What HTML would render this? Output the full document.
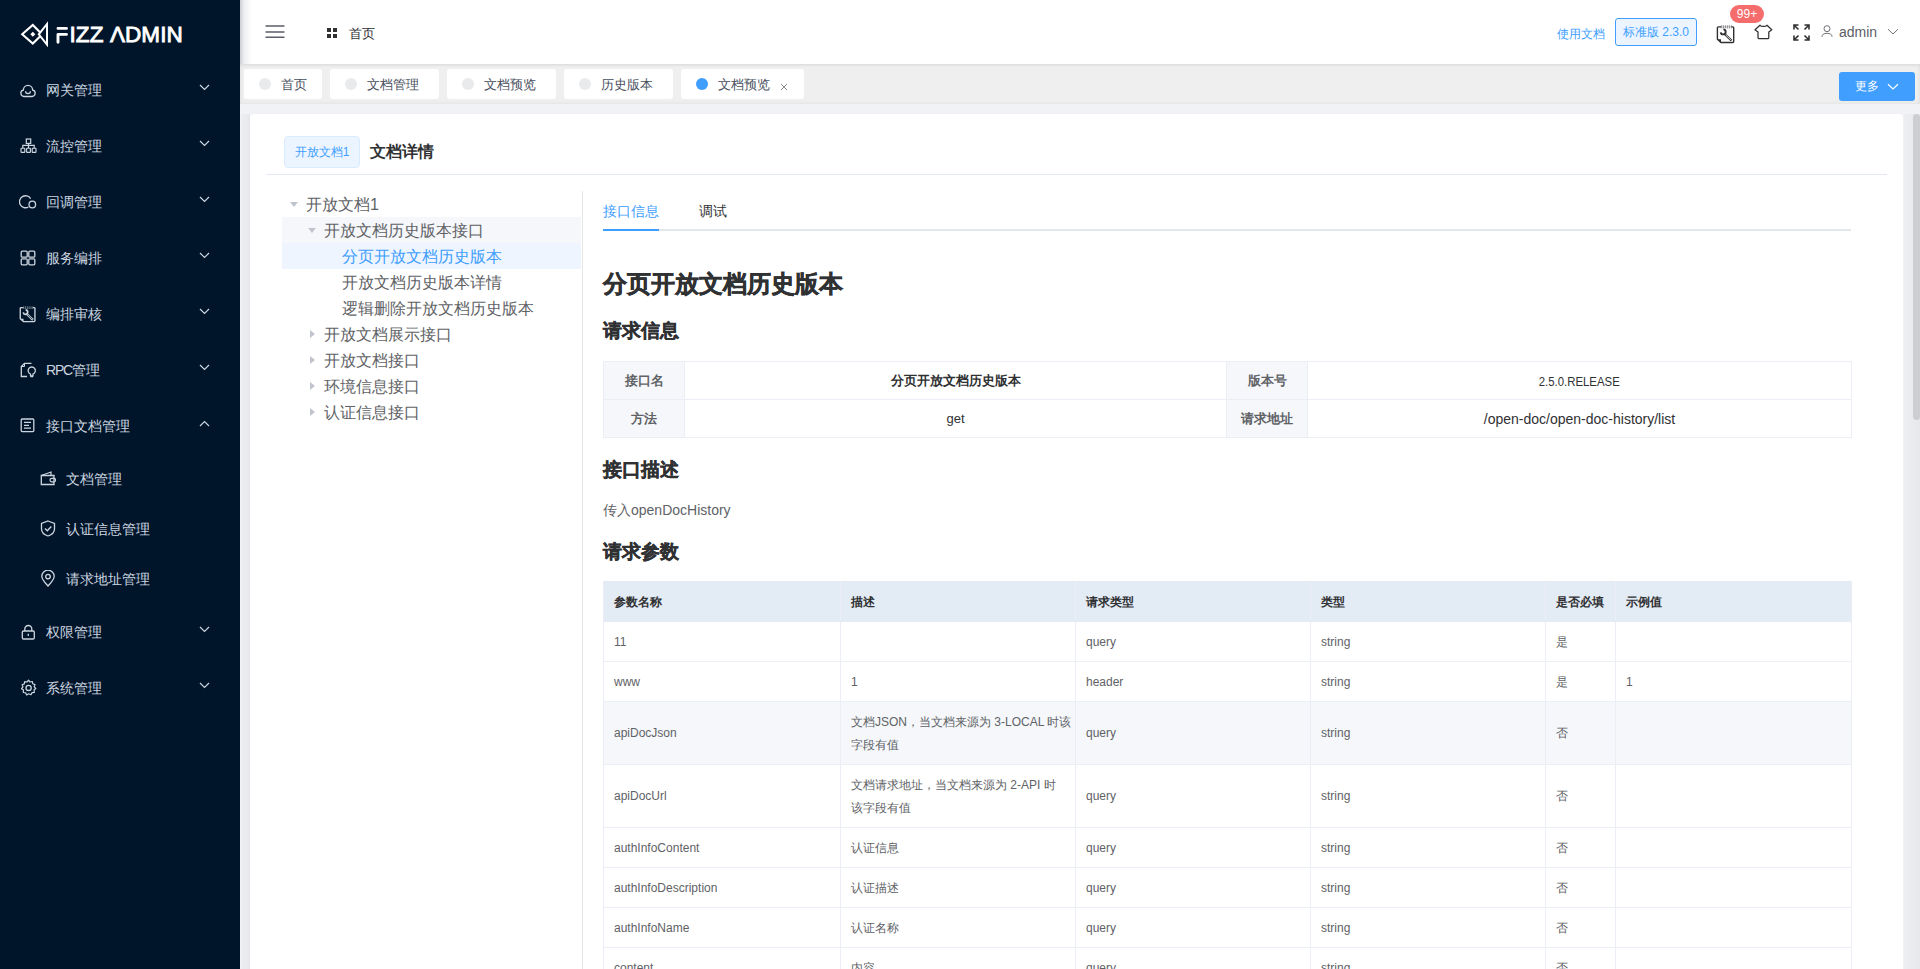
<!DOCTYPE html>
<html><head><meta charset="utf-8">
<style>
*{box-sizing:border-box;margin:0;padding:0}
html,body{width:1920px;height:969px;overflow:hidden;background:#f0f2f5;font-family:"Liberation Sans",sans-serif;color:#606266}
.abs{position:absolute}
#side{position:absolute;left:0;top:0;width:240px;height:969px;background:#001529;z-index:3}
.mi{position:absolute;left:0;width:240px;height:56px;color:#cdd5e0;font-size:14px}
.mi .t{position:absolute;left:46px;top:1px;line-height:56px;white-space:nowrap}
.mi svg.ic{position:absolute}
.mi svg.ch{position:absolute;left:199px;top:23px}
.si .t{left:66px;line-height:50px}
#hdr{position:absolute;left:240px;top:0;width:1680px;height:64px;background:#fff;z-index:2;box-shadow:0 1px 4px rgba(0,21,41,.08)}
#tabs{position:absolute;left:240px;top:64px;width:1680px;height:40px;background:#efefef;z-index:4;box-shadow:inset 0 0 4px rgba(0,0,0,.07), inset 0 2px 2px rgba(0,0,0,.035)}
.tab{position:absolute;top:5px;height:30px;background:#fff;border-radius:3px;font-size:13px;color:#495060}
.tab .dot{position:absolute;left:15px;top:9px;width:12px;height:12px;border-radius:50%;background:#e8eaec}
.tab .t{position:absolute;left:37px;top:1px;line-height:30px;white-space:nowrap}
#card{position:absolute;left:250px;top:114px;width:1653px;height:900px;background:#fff;border-radius:4px}
.sb{position:absolute;left:1913px;top:114px;width:7px;height:306px;background:#cdced2;border-radius:4px}
.tn{position:absolute;left:0;width:299px;height:26px}
.tn span{position:absolute;top:1px;line-height:26px;white-space:nowrap}
.car{position:absolute;width:0;height:0;border-style:solid}
.car.dn{top:11px;border-width:5px 4px 0 4px;border-color:#c0c4cc transparent transparent transparent}
.car.rt{top:9px;border-width:4px 0 4px 5px;border-color:transparent transparent transparent #c0c4cc}
table{border-collapse:collapse;table-layout:fixed}
.desc td{border:1px solid #ebeef5;height:38px;font-size:13px;text-align:center;color:#303133;padding:0 10px;white-space:nowrap}
.desc td.lb{background:#f5f7fa;color:#606266;font-weight:bold}
.ptab td{border:1px solid #ebeef5;height:40px;font-size:12px;color:#606266;padding:1px 10px 0;line-height:23px;white-space:nowrap;overflow:visible;vertical-align:middle}
.ptab tr.th td{background:#e3ebf4;color:#303133;font-weight:bold;border-color:#e3ebf4 #ebeef5}
.ptab tr.hv td{background:#f5f7fa}
.ptab tr.hv td,.ptab tr.two td{height:63px}
</style></head><body>

<div id="side">
  <!-- logo -->
  <svg class="abs" style="left:19px;top:21px" width="30" height="26" viewBox="0 0 30 26">
    <path d="M21 11.2 L13.8 4 L3.2 13.3 L13.8 22.6 L21 15.4" fill="none" stroke="#fff" stroke-width="2.1" stroke-linejoin="miter"/>
    <path d="M13.8 10.8 L16.3 13.3 L13.8 15.8 L11.3 13.3 Z" fill="#fff"/>
    <path d="M28 3 L28 23.6 L19.8 13.3 Z" fill="none" stroke="#fff" stroke-width="2" stroke-linejoin="miter"/>
  </svg>
  <svg class="abs" style="left:55px;top:25px" width="14" height="20" viewBox="0 0 14 20"><path d="M3 3.4 H11.5 M3 17.2 V9.4 H11.5" fill="none" stroke="#fff" stroke-width="2.9" stroke-linecap="round" stroke-linejoin="round"/></svg><div class="abs" style="left:69.5px;top:22px;font-size:22.5px;font-weight:normal;color:#fff;letter-spacing:0.1px;-webkit-text-stroke:0.85px #fff;line-height:26px;white-space:nowrap">IZZ ΛDMIN</div>

  <div class="mi" style="top:61px"><svg class="ic" style="left:20px;top:22px" width="16" height="15" viewBox="0 0 16 15"><path d="M4 13.5 H12 A3.3 3.3 0 0 0 12.6 7 A4.6 4.6 0 0 0 3.4 7 A3.3 3.3 0 0 0 4 13.5 Z" fill="none" stroke="#cdd5e0" stroke-width="1.3"/><path d="M5.6 8.3 A2.4 2.4 0 0 0 10.4 8.3" fill="none" stroke="#cdd5e0" stroke-width="1.3"/></svg><span class="t">网关管理</span><svg class="ch" width="11" height="7" viewBox="0 0 11 7"><path d="M1 1 L5.5 5.5 L10 1" fill="none" stroke="#cdd5e0" stroke-width="1.2"/></svg></div>

  <div class="mi" style="top:117px"><svg class="ic" style="left:20px;top:21px" width="17" height="16" viewBox="0 0 17 16"><rect x="6.3" y="1" width="4.4" height="4.4" fill="none" stroke="#cdd5e0" stroke-width="1.2"/><path d="M8.5 5.4 V7.4 M2.8 10 V7.4 H14.2 V10 M8.5 7.4 V10" fill="none" stroke="#cdd5e0" stroke-width="1.2"/><rect x="1" y="10.2" width="3.8" height="4.2" rx="0.6" fill="none" stroke="#cdd5e0" stroke-width="1.15"/><rect x="6.6" y="10.2" width="3.8" height="4.2" rx="0.6" fill="none" stroke="#cdd5e0" stroke-width="1.15"/><rect x="12.2" y="10.2" width="3.8" height="4.2" rx="0.6" fill="none" stroke="#cdd5e0" stroke-width="1.15"/></svg><span class="t">流控管理</span><svg class="ch" width="11" height="7" viewBox="0 0 11 7"><path d="M1 1 L5.5 5.5 L10 1" fill="none" stroke="#cdd5e0" stroke-width="1.2"/></svg></div>

  <div class="mi" style="top:173px"><svg class="ic" style="left:19px;top:21px" width="18" height="15" viewBox="0 0 18 15"><path d="M11.6 4.6 A6 6 0 1 0 9.4 13" fill="none" stroke="#cdd5e0" stroke-width="1.3"/><circle cx="13.3" cy="10.5" r="3.3" fill="none" stroke="#cdd5e0" stroke-width="1.3"/></svg><span class="t">回调管理</span><svg class="ch" width="11" height="7" viewBox="0 0 11 7"><path d="M1 1 L5.5 5.5 L10 1" fill="none" stroke="#cdd5e0" stroke-width="1.2"/></svg></div>

  <div class="mi" style="top:229px"><svg class="ic" style="left:20px;top:21px" width="16" height="16" viewBox="0 0 16 16"><rect x="1.2" y="1.2" width="6" height="6" rx="1" fill="none" stroke="#cdd5e0" stroke-width="1.3"/><rect x="8.8" y="1.2" width="6" height="6" rx="1" fill="none" stroke="#cdd5e0" stroke-width="1.3"/><rect x="1.2" y="8.8" width="6" height="6" rx="1" fill="none" stroke="#cdd5e0" stroke-width="1.3"/><rect x="8.8" y="8.8" width="6" height="6" rx="1" fill="none" stroke="#cdd5e0" stroke-width="1.3"/></svg><span class="t">服务编排</span><svg class="ch" width="11" height="7" viewBox="0 0 11 7"><path d="M1 1 L5.5 5.5 L10 1" fill="none" stroke="#cdd5e0" stroke-width="1.2"/></svg></div>

  <div class="mi" style="top:285px"><svg class="ic" style="left:19px;top:20px" width="18" height="18" viewBox="0 0 20 20"><path d="M4 2.9 H16.8 A0.9 0.9 0 0 1 17.7 3.8 V17.6 A0.9 0.9 0 0 1 16.8 18.5 H5 L1.4 15.2 V3.8 A0.9 0.9 0 0 1 2.3 2.9 Z" fill="none" stroke="#cdd5e0" stroke-width="1.5"/><path d="M1.6 15.3 H5 V18.4 Z" fill="#cdd5e0"/><path d="M5 3 H15.5" stroke="#001529" stroke-width="1.8"/><path d="M5.3 1.3 V4.4 M7.3 1.3 V4.4 M9.3 1.3 V4.4 M11.3 1.3 V4.4 M13.3 1.3 V4.4 M15.3 1.3 V4.4" stroke="#8a96a3" stroke-width="0.8"/><path d="M7.4 5.4 A2.5 2.5 0 1 1 4.7 8.3" fill="none" stroke="#cdd5e0" stroke-width="1.9"/><path d="M8.6 10 L15.5 16.5" stroke="#cdd5e0" stroke-width="2.4"/><path d="M9.6 10.9 L14.9 15.9" stroke="#001529" stroke-width="0.8"/></svg><span class="t">编排审核</span><svg class="ch" width="11" height="7" viewBox="0 0 11 7"><path d="M1 1 L5.5 5.5 L10 1" fill="none" stroke="#cdd5e0" stroke-width="1.2"/></svg></div>

  <div class="mi" style="top:341px"><svg class="ic" style="left:20px;top:21px" width="17" height="16" viewBox="0 0 17 16"><path d="M7 14.5 H1.3 V4.5 L4.5 1.3 H11.5" fill="none" stroke="#cdd5e0" stroke-width="1.3"/><path d="M1.3 4.5 H4.5 V1.3" fill="none" stroke="#cdd5e0" stroke-width="1"/><path d="M10.5 14.5 H13 M10.5 12 A3.6 3.6 0 1 1 13 12 V13.8 H10.5 Z" fill="none" stroke="#cdd5e0" stroke-width="1.3"/></svg><span class="t"><span style="letter-spacing:-1.2px">RPC</span>管理</span><svg class="ch" width="11" height="7" viewBox="0 0 11 7"><path d="M1 1 L5.5 5.5 L10 1" fill="none" stroke="#cdd5e0" stroke-width="1.2"/></svg></div>

  <div class="mi" style="top:397px"><svg class="ic" style="left:20px;top:21px" width="16" height="15" viewBox="0 0 16 15"><rect x="1.2" y="1" width="12.6" height="12.6" rx="1" fill="none" stroke="#cdd5e0" stroke-width="1.3"/><path d="M4 4.4 H11 M4 7.3 H9 M4 10.2 H11" stroke="#cdd5e0" stroke-width="1.2"/></svg><span class="t">接口文档管理</span><svg class="ch" width="11" height="7" viewBox="0 0 11 7"><path d="M1 6 L5.5 1.5 L10 6" fill="none" stroke="#cdd5e0" stroke-width="1.2"/></svg></div>

  <div class="mi si" style="top:453px;height:50px"><svg class="ic" style="left:40px;top:18px" width="17" height="15" viewBox="0 0 17 15"><path d="M14 6.5 V13.5 H1.3 V4.5 H14 V6.5" fill="none" stroke="#cdd5e0" stroke-width="1.3"/><path d="M1.3 4.5 L11 1 V4.5" fill="none" stroke="#cdd5e0" stroke-width="1.2"/><rect x="10" y="7.3" width="5.6" height="3.6" rx="1.8" fill="none" stroke="#cdd5e0" stroke-width="1.2"/></svg><span class="t">文档管理</span></div>
  <div class="mi si" style="top:503px;height:50px"><svg class="ic" style="left:40px;top:17px" width="16" height="17" viewBox="0 0 16 17"><path d="M8 1 L14.5 3.5 V9 C14.5 12.3 11.5 14.8 8 16 C4.5 14.8 1.5 12.3 1.5 9 V3.5 Z" fill="none" stroke="#cdd5e0" stroke-width="1.3"/><path d="M5 8.5 L7.3 10.8 L11.3 6.5" fill="none" stroke="#cdd5e0" stroke-width="1.4"/></svg><span class="t">认证信息管理</span></div>
  <div class="mi si" style="top:553px;height:50px"><svg class="ic" style="left:40px;top:17px" width="16" height="17" viewBox="0 0 16 17"><path d="M8 16 C4.5 12 1.8 9.2 1.8 6.4 A6.2 6.2 0 0 1 14.2 6.4 C14.2 9.2 11.5 12 8 16 Z" fill="none" stroke="#cdd5e0" stroke-width="1.3"/><circle cx="8" cy="6.6" r="2.3" fill="none" stroke="#cdd5e0" stroke-width="1.3"/></svg><span class="t">请求地址管理</span></div>

  <div class="mi" style="top:603px"><svg class="ic" style="left:21px;top:21px" width="15" height="16" viewBox="0 0 15 16"><rect x="1.3" y="7" width="12" height="8" rx="1.2" fill="none" stroke="#cdd5e0" stroke-width="1.3"/><path d="M3.8 7 V5 A3.5 3.5 0 0 1 10.8 5 V7" fill="none" stroke="#cdd5e0" stroke-width="1.3"/><path d="M7.3 9.8 V12" stroke="#cdd5e0" stroke-width="1.3"/></svg><span class="t">权限管理</span><svg class="ch" width="11" height="7" viewBox="0 0 11 7"><path d="M1 1 L5.5 5.5 L10 1" fill="none" stroke="#cdd5e0" stroke-width="1.2"/></svg></div>

  <div class="mi" style="top:659px"><svg class="ic" style="left:20px;top:20px" width="17" height="17" viewBox="0 0 17 17"><path d="M8.5 1.2 L10 3 L12.3 2.5 L12.8 4.8 L15 5.6 L14.2 7.8 L15.8 9.5 L14 11 L14.4 13.3 L12.1 13.6 L11 15.7 L8.8 14.8 L6.7 16 L5.7 13.8 L3.3 13.5 L3.5 11.1 L1.5 9.7 L3 7.9 L2.1 5.7 L4.3 4.9 L4.7 2.6 L7 3 Z" fill="none" stroke="#cdd5e0" stroke-width="1.2" stroke-linejoin="round"/><circle cx="8.6" cy="8.9" r="2.6" fill="none" stroke="#cdd5e0" stroke-width="1.3"/></svg><span class="t">系统管理</span><svg class="ch" width="11" height="7" viewBox="0 0 11 7"><path d="M1 1 L5.5 5.5 L10 1" fill="none" stroke="#cdd5e0" stroke-width="1.2"/></svg></div>
</div>

<div id="hdr">
  <svg class="abs" style="left:25px;top:24px" width="20" height="16" viewBox="0 0 20 16"><path d="M0.5 2 H19.5 M0.5 7.9 H19.5 M0.5 13.3 H19.5" stroke="#5a5e66" stroke-width="1.5"/></svg>
  <svg class="abs" style="left:87px;top:28px" width="10" height="10" viewBox="0 0 10 10"><rect x="0" y="0" width="4" height="4" fill="#303133"/><rect x="6" y="0" width="4" height="4" fill="#303133"/><rect x="0" y="6" width="4" height="4" fill="#303133"/><rect x="6" y="6" width="4" height="4" fill="#303133"/></svg>
  <div class="abs" style="left:109px;top:25px;font-size:13px;line-height:18px;color:#303133">首页</div>
  <div class="abs" style="left:1317px;top:25px;font-size:12px;line-height:18px;color:#409eff">使用文档</div>
  <div class="abs" style="left:1375px;top:18px;width:82px;height:28px;border:1px solid #409eff;background:#ecf5ff;border-radius:3px;font-size:12px;line-height:26px;color:#409eff;text-align:center;white-space:nowrap">标准版 2.3.0</div>
  <svg class="abs" style="left:1476px;top:24px" width="20" height="20" viewBox="0 0 20 20"><path d="M4 2.9 H16.8 A0.9 0.9 0 0 1 17.7 3.8 V17.6 A0.9 0.9 0 0 1 16.8 18.5 H5 L1.4 15.2 V3.8 A0.9 0.9 0 0 1 2.3 2.9 Z" fill="none" stroke="#303133" stroke-width="1.4"/><path d="M1.6 15.3 H5 V18.4 Z" fill="#303133"/><path d="M5 3 H15.5" stroke="#fff" stroke-width="1.8"/><path d="M5.3 1.3 V4.4 M7.3 1.3 V4.4 M9.3 1.3 V4.4 M11.3 1.3 V4.4 M13.3 1.3 V4.4 M15.3 1.3 V4.4" stroke="#606266" stroke-width="0.8"/><path d="M7.4 5.4 A2.5 2.5 0 1 1 4.7 8.3" fill="none" stroke="#303133" stroke-width="1.9"/><path d="M8.6 10 L15.5 16.5" stroke="#303133" stroke-width="2.4"/><path d="M9.6 10.9 L14.9 15.9" stroke="#fff" stroke-width="0.8"/></svg>
  <div class="abs" style="left:1490px;top:5px;width:34px;height:18px;border-radius:9px;background:#f56c6c;color:#fff;font-size:12px;line-height:18px;text-align:center">99+</div>
  <svg class="abs" style="left:1514px;top:24px" width="19" height="16" viewBox="0 0 19 16"><path d="M6 1.2 C7 2.9 12 2.9 13 1.2 L17.8 5.7 L14.8 8 V13.4 Q14.8 14.7 13.5 14.7 H5.3 Q4 14.7 4 13.4 V8 L1 5.7 Z" fill="none" stroke="#303133" stroke-width="1.25" stroke-linejoin="round"/></svg>
  <svg class="abs" style="left:1553px;top:24px" width="17" height="17" viewBox="0 0 17 17"><path d="M1 5.5 V1 H5.5 M1 1 L5.5 5.5 M11.5 1 H16 V5.5 M16 1 L11.5 5.5 M1 11.5 V16 H5.5 M1 16 L5.5 11.5 M16 11.5 V16 H11.5 M16 16 L11.5 11.5" fill="none" stroke="#303133" stroke-width="1.6"/></svg>
  <svg class="abs" style="left:1581px;top:25px" width="13" height="13" viewBox="0 0 13 13"><circle cx="6" cy="3.7" r="3" fill="none" stroke="#606266" stroke-width="0.9"/><path d="M1 11.8 Q1 8.3 6 8.3 Q11 8.3 11 11.8" fill="none" stroke="#606266" stroke-width="0.9"/></svg>
  <div class="abs" style="left:1599px;top:23px;font-size:14px;line-height:18px;color:#5a5e66">admin</div>
  <svg class="abs" style="left:1647px;top:28px" width="12" height="8" viewBox="0 0 12 8"><path d="M1 1.2 L6 6 L11 1.2" fill="none" stroke="#606266" stroke-width="0.9"/></svg>
</div>
<div id="tabs">
  <div class="tab" style="left:4px;width:78px"><span class="dot"></span><span class="t">首页</span></div>
  <div class="tab" style="left:90px;width:109px"><span class="dot"></span><span class="t" style="left:37px">文档管理</span></div>
  <div class="tab" style="left:207px;width:109px"><span class="dot"></span><span class="t">文档预览</span></div>
  <div class="tab" style="left:324px;width:109px"><span class="dot"></span><span class="t">历史版本</span></div>
  <div class="tab" style="left:441px;width:123px"><span class="dot" style="background:#409eff"></span><span class="t">文档预览</span><svg class="abs" style="left:99px;top:14px" width="8" height="8" viewBox="0 0 8 8"><path d="M1 1 L7 7 M7 1 L1 7" stroke="#7a7d82" stroke-width="0.9"/></svg></div>
  <div class="abs" style="left:1599px;top:8px;width:76px;height:29px;background:#409eff;border-radius:3px;color:#fff;font-size:12px"><span class="abs" style="left:16px;top:0;line-height:29px">更多</span><svg class="abs" style="left:48px;top:11px" width="12" height="8" viewBox="0 0 12 8"><path d="M1 1.2 L6 6 L11 1.2" fill="none" stroke="#fff" stroke-width="1.2"/></svg></div>
</div>
<div class="abs" style="left:240px;top:0;width:12px;height:64px;z-index:2;background:linear-gradient(90deg,rgba(0,21,41,.2),rgba(0,21,41,.07) 35%,rgba(0,21,41,0))"></div><div class="abs" style="left:240px;top:114px;width:10px;height:855px;background:linear-gradient(90deg,#f3f4f6,#ecedf0 20%,#e9eaee 80%,#e4e5e9)"></div>
<div id="card">
  <div class="abs" style="left:34px;top:22px;width:76px;height:32px;border:1px solid #d9ecff;background:#ecf5ff;border-radius:4px;color:#409eff;font-size:12px;line-height:30px;text-align:center;white-space:nowrap">开放文档1</div>
  <div class="abs" style="left:120px;top:27px;font-size:16px;line-height:22px;font-weight:bold;color:#303133;white-space:nowrap">文档详情</div>
  <div class="abs" style="left:16px;top:60px;width:1621px;height:1px;background:#e4e8f0"></div>
  <!-- tree -->
  <div class="abs" style="left:32px;top:77px;width:299px;font-size:16px;color:#606266">
    <div class="tn" style="top:0"><i class="car dn" style="left:8px"></i><span style="left:24px">开放文档1</span></div>
    <div class="tn" style="top:26px;background:#f5f7fa"><i class="car dn" style="left:26px"></i><span style="left:42px">开放文档历史版本接口</span></div>
    <div class="tn" style="top:52px;background:#eef5fe;color:#409eff"><span style="left:60px">分页开放文档历史版本</span></div>
    <div class="tn" style="top:78px"><span style="left:60px">开放文档历史版本详情</span></div>
    <div class="tn" style="top:104px"><span style="left:60px">逻辑删除开放文档历史版本</span></div>
    <div class="tn" style="top:130px"><i class="car rt" style="left:28px"></i><span style="left:42px">开放文档展示接口</span></div>
    <div class="tn" style="top:156px"><i class="car rt" style="left:28px"></i><span style="left:42px">开放文档接口</span></div>
    <div class="tn" style="top:182px"><i class="car rt" style="left:28px"></i><span style="left:42px">环境信息接口</span></div>
    <div class="tn" style="top:208px"><i class="car rt" style="left:28px"></i><span style="left:42px">认证信息接口</span></div>
  </div>
  <div class="abs" style="left:332px;top:77px;width:1px;height:900px;background:#e6e6e6"></div>
  <!-- right tabs -->
  <div class="abs" style="left:353px;top:88px;font-size:14px;line-height:18px;color:#409eff">接口信息</div>
  <div class="abs" style="left:449px;top:88px;font-size:14px;line-height:18px;color:#303133">调试</div>
  <div class="abs" style="left:353px;top:115px;width:1248px;height:2px;background:#e4e7ed"></div>
  <div class="abs" style="left:353px;top:115px;width:56px;height:2px;background:#409eff"></div>
  <div class="abs" style="left:353px;top:155px;font-size:24px;line-height:30px;font-weight:bold;color:#303133;-webkit-text-stroke:0.5px #303133;white-space:nowrap">分页开放文档历史版本</div>
  <div class="abs" style="left:353px;top:205px;font-size:18.72px;line-height:24px;font-weight:bold;color:#303133;-webkit-text-stroke:0.35px #303133;white-space:nowrap">请求信息</div>
  <table class="desc abs" style="left:353px;top:247px;width:1248px">
    <tr><td class="lb" style="width:81px">接口名</td><td class="vl" style="width:542px;font-weight:bold">分页开放文档历史版本</td><td class="lb" style="width:81px">版本号</td><td class="vl" style="width:544px;font-size:13px;padding-top:2px"><span style="display:inline-block;transform:scaleX(0.875)">2.5.0.RELEASE</span></td></tr>
    <tr><td class="lb">方法</td><td class="vl">get</td><td class="lb">请求地址</td><td class="vl" style="font-size:14px">/open-doc/open-doc-history/list</td></tr>
  </table>
  <div class="abs" style="left:353px;top:344px;font-size:18.72px;line-height:24px;font-weight:bold;color:#303133;-webkit-text-stroke:0.35px #303133;white-space:nowrap">接口描述</div>
  <div class="abs" style="left:353px;top:386px;font-size:14px;line-height:20px;color:#606266;white-space:nowrap">传入openDocHistory</div>
  <div class="abs" style="left:353px;top:426px;font-size:18.72px;line-height:24px;font-weight:bold;color:#303133;-webkit-text-stroke:0.35px #303133;white-space:nowrap">请求参数</div>
  <table class="ptab abs" style="left:353px;top:467px;width:1248px">
    <tr class="th"><td style="width:237px">参数名称</td><td style="width:235px">描述</td><td style="width:235px">请求类型</td><td style="width:235px">类型</td><td style="width:70px">是否必填</td><td style="width:236px">示例值</td></tr>
    <tr><td>11</td><td></td><td>query</td><td>string</td><td>是</td><td></td></tr>
    <tr><td>www</td><td>1</td><td>header</td><td>string</td><td>是</td><td>1</td></tr>
    <tr class="hv"><td>apiDocJson</td><td>文档JSON，当文档来源为 3-LOCAL 时该<br>字段有值</td><td>query</td><td>string</td><td>否</td><td></td></tr>
    <tr class="two"><td>apiDocUrl</td><td>文档请求地址，当文档来源为 2-API 时<br>该字段有值</td><td>query</td><td>string</td><td>否</td><td></td></tr>
    <tr><td>authInfoContent</td><td>认证信息</td><td>query</td><td>string</td><td>否</td><td></td></tr>
    <tr><td>authInfoDescription</td><td>认证描述</td><td>query</td><td>string</td><td>否</td><td></td></tr>
    <tr><td>authInfoName</td><td>认证名称</td><td>query</td><td>string</td><td>否</td><td></td></tr>
    <tr><td>content</td><td>内容</td><td>query</td><td>string</td><td>否</td><td></td></tr>
  </table>
</div>
<div class="abs" style="left:1904px;top:114px;width:16px;height:855px;background:linear-gradient(90deg,#eceef1,#e7e8ec)"></div><div class="sb"></div>

</body></html>
